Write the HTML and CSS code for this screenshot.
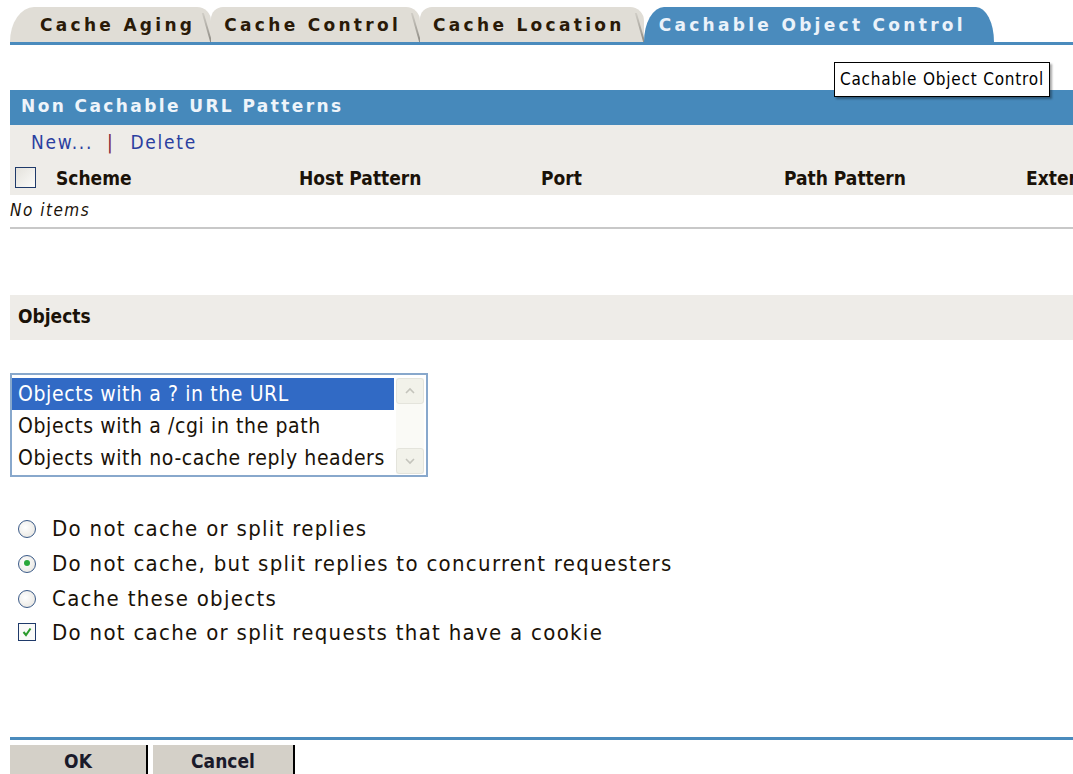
FILE: index.html
```html
<!DOCTYPE html>
<html>
<head>
<meta charset="utf-8">
<link rel="stylesheet" href="styles.css">
</head>
<body>
<div class="page">
  <div class="tabs">
    <div class="tab first">Cache Aging</div>
    <div class="tab">Cache Control</div>
    <div class="tab">Cache Location</div>
    <div class="tab active">Cachable Object Control</div>
  </div>

  <div class="tip-row"><span class="tooltip">Cachable Object Control</span></div>

  <div class="panel-title">Non Cachable URL Patterns</div>
  <div class="toolbar">
    <a class="link">New...</a><span class="sep">|</span><a class="link">Delete</a>
  </div>
  <div class="cols">
    <span class="col c-scheme"><span class="box"></span>Scheme</span>
    <span class="col c-host">Host Pattern</span>
    <span class="col c-port">Port</span>
    <span class="col c-path">Path Pattern</span>
    <span class="col c-ext">Extensions</span>
  </div>
  <div class="empty">No items</div>

  <div class="section">Objects</div>

  <div class="listbox">
    <div class="items">
      <div class="item sel">Objects with a ? in the URL</div>
      <div class="item">Objects with a /cgi in the path</div>
      <div class="item">Objects with no-cache reply headers</div>
    </div>
    <div class="scroll">
      <div class="arrow">
        <svg width="12" height="8" viewBox="0 0 12 8"><path d="M2 6 L6 2 L10 6" fill="none" stroke="#c4c4bc" stroke-width="1.6"/></svg>
      </div>
      <div class="arrow">
        <svg width="12" height="8" viewBox="0 0 12 8"><path d="M2 2 L6 6 L10 2" fill="none" stroke="#c4c4bc" stroke-width="1.6"/></svg>
      </div>
    </div>
  </div>

  <div class="options">
    <div class="opt"><span class="radio"></span>Do not cache or split replies</div>
    <div class="opt"><span class="radio on"></span>Do not cache, but split replies to concurrent requesters</div>
    <div class="opt"><span class="radio"></span>Cache these objects</div>
    <div class="opt"><span class="check"><svg width="12" height="12" viewBox="0 0 12 12"><path d="M2.5 6 L5 9 L9.5 2.5" fill="none" stroke="#2a9a2a" stroke-width="2"/></svg></span>Do not cache or split requests that have a cookie</div>
  </div>

  <div class="footer">
    <button class="btn">OK</button>
    <button class="btn">Cancel</button>
  </div>
</div>
</body>
</html>
```

FILE: styles.css
```css
html, body {
  margin: 0;
  padding: 0;
  background: #ffffff;
  overflow: hidden;
}

.page {
  font-family: "DejaVu Sans Condensed", "DejaVu Sans", sans-serif;
  color: #1a1208;
  width: 1073px;
  height: 774px;
  overflow: hidden;
}

/* tab strip */
.tabs {
  display: flex;
  margin: 7px 0 0 10px;
  height: 35px;
  border-bottom: 3px solid #4a8bbd;
  align-items: flex-end;
}
.tab {
  position: relative;
  height: 35px;
  line-height: 36px;
  padding: 0 19px 0 13px;
  background: #e0ddd6;
  font-family: "DejaVu Sans", sans-serif;
  font-weight: bold;
  font-size: 17px;
  letter-spacing: 3.3px;
  color: #2a1a08;
  border-top-left-radius: 12px 12px;
  border-top-right-radius: 14px 14px;
  white-space: nowrap;
}
/* slanted divider on the right edge of each inactive tab */
.tab::after {
  content: "";
  position: absolute;
  right: 3px;
  top: 6px;
  width: 2px;
  height: 29px;
  background: linear-gradient(#d0cdc6, #8e8b84);
  transform: skewX(16deg);
}
.tab.first {
  padding-left: 30px;
  padding-right: 16px;
  border-top-left-radius: 24px 35px;
}
.tab.active {
  background: #4a8bbd;
  color: #eaf2fa;
  padding: 0 28px 0 15px;
  border-top-left-radius: 20px 35px;
  border-top-right-radius: 18px 35px;
}
.tab.active::after { display: none; }

.tip-row {
  display: flex;
  justify-content: flex-end;
  height: 51px;
}
.tooltip {
  margin: 17px 23px 0 0;
  height: 33px;
  padding: 0 5px;
  line-height: 33px;
  border: 1px solid #000;
  background: #fff;
  font-size: 17px;
  letter-spacing: 0.8px;
  color: #000;
  box-shadow: 2px 2px 2px rgba(0,0,0,0.35);
  position: relative;
  z-index: 2;
  white-space: nowrap;
}

.panel-title {
  margin-left: 10px;
  height: 35px;
  line-height: 32px;
  padding-left: 11px;
  background: #4689bb;
  color: #eef4fa;
  font-family: "DejaVu Sans", sans-serif;
  font-weight: bold;
  font-size: 17px;
  letter-spacing: 2.4px;
  margin-top: -6px;
}

.toolbar {
  margin-left: 10px;
  height: 35px;
  line-height: 35px;
  background: #eeece8;
  padding-left: 21px;
  font-size: 19px;
  letter-spacing: 1.7px;
}
.link { color: #2a3fa0; }
.sep { color: #7a1a3a; margin: 0 16px 0 14px; }

.cols {
  margin-left: 10px;
  height: 35px;
  line-height: 36px;
  background: #eeece8;
  display: flex;
  font-weight: bold;
  font-size: 19px;
  white-space: nowrap;
  overflow: hidden;
}
.col { display: flex; align-items: center; flex-shrink: 0; }
.c-scheme { width: 289px; }
.c-host { width: 242px; }
.c-port { width: 243px; }
.c-path { width: 242px; }
.box {
  width: 19px;
  height: 19px;
  border: 1px solid #1f3a6a;
  background: linear-gradient(135deg, #e4e2dc, #fbfbf9);
  margin: 0 20px 0 5px;
}

.empty {
  margin-left: 10px;
  height: 32px;
  line-height: 30px;
  font-style: italic;
  font-size: 17px;
  letter-spacing: 1.5px;
  border-bottom: 2px solid #c8c8c8;
}

.section {
  margin: 66px 0 0 10px;
  height: 45px;
  line-height: 43px;
  background: #eeece8;
  padding-left: 8px;
  font-weight: bold;
  font-size: 19px;
}

.listbox {
  margin: 33px 0 0 10px;
  width: 414px;
  height: 96px;
  border: 2px solid #88a8cc;
  display: flex;
  padding: 3px 0 1px;
  box-sizing: content-box;
}
.items { width: 382px; }
.item {
  height: 32px;
  line-height: 32px;
  padding-left: 6px;
  font-size: 21px;
  letter-spacing: 0.6px;
  white-space: nowrap;
}
.item.sel { background: #316ac5; color: #ffffff; }
.scroll {
  width: 28px;
  margin-left: 2px;
  background: #fafaf6;
  display: flex;
  flex-direction: column;
  justify-content: space-between;
}
.arrow {
  height: 24px;
  border: 1px solid #e4e4dc;
  border-radius: 3px;
  background: #f2f2ea;
  display: flex;
  align-items: center;
  justify-content: center;
}

.options {
  margin: 34px 0 0 18px;
}
.opt {
  display: flex;
  align-items: center;
  height: 35px;
  font-size: 22px;
  letter-spacing: 1.3px;
  white-space: nowrap;
}
.radio {
  width: 18px;
  height: 18px;
  border: 1.5px solid #3a5a88;
  border-radius: 50%;
  margin-right: 16px;
  background: radial-gradient(circle at 40% 40%, #ffffff, #e4e2dc);
  box-sizing: border-box;
  position: relative;
}
.radio.on::after {
  content: "";
  position: absolute;
  width: 6px;
  height: 6px;
  left: 4.5px;
  top: 4.5px;
  border-radius: 50%;
  background: #2aa83a;
}
.check {
  width: 18px;
  height: 18px;
  border: 1.5px solid #1f3a6a;
  background: #fafaf8;
  margin-right: 16px;
  display: flex;
  align-items: center;
  justify-content: center;
  box-sizing: border-box;
}
.opt:last-child { height: 32px; }

.footer {
  margin: 89px 0 0 10px;
  border-top: 3px solid #4a8bbd;
  padding-top: 5px;
  display: flex;
  gap: 5px;
}
.btn {
  width: 138px;
  height: 32px;
  background: #d4d0c8;
  border: none;
  border-right: 2px solid #000;
  font-family: "DejaVu Sans Condensed", "DejaVu Sans", sans-serif;
  font-weight: bold;
  font-size: 19px;
  color: #1a1a2a;
  padding: 0;
  text-align: center;
  line-height: 30px;
}
.btn + .btn { width: 142px; }
```
